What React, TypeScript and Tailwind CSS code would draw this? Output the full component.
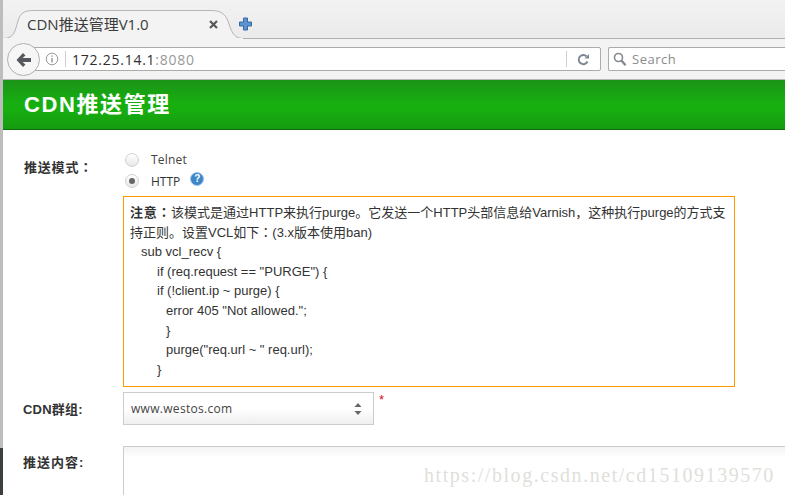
const sans = "font-['Liberation_Sans','Noto_Sans_CJK_SC',sans-serif]";

const BackArrow = () => (
  <svg width="18" height="16" viewBox="0 0 18 16">
    <path d="M8 1 L1.5 8 L8 15 L10.5 12.6 L7.5 10 H16 V6 H7.5 L10.5 3.4 Z" fill="#55585c" />
  </svg>
);

const Reload = () => (
  <svg width="13" height="13" viewBox="0 0 13 13" fill="none">
    <path d="M10.5 8.5 A4.6 4.6 0 1 1 9.5 3.2" stroke="#7d8794" strokeWidth="2" />
    <path d="M7.5 5.5 H12 V1 Z" fill="#7d8794" />
  </svg>
);

const SearchIcon = () => (
  <svg width="14" height="15" viewBox="0 0 14 15" fill="none">
    <circle cx="5.5" cy="5.5" r="4" stroke="#85898e" strokeWidth="1.6" />
    <path d="M8.6 8.8 L12.6 13.2" stroke="#85898e" strokeWidth="2.4" />
  </svg>
);

// the fullwidth colon sits centred in the reference, as in the TC face
const Colon = () => <span className="font-['Noto_Sans_CJK_TC',sans-serif]">：</span>;

const Tab = () => (
  <div className="relative w-[240px] h-[29px] mt-[10px] mb-[-1px] flex items-center pl-[24px] pr-[25px]">
    <svg className="absolute left-0 top-0" width="240" height="29" viewBox="0 0 240 29">
      <path
        d="M0 28.5 C12 28.5 12 20 15 11 C17 4 20 0.5 30 0.5 H208 C218 0.5 222 4 225 11 C228 20 230 28.5 240 28.5 V29 H0 Z"
        fill="#f3f3f3"
        stroke="#b4b4b4"
      />
      <path d="M0 29 H240" stroke="#f3f3f3" strokeWidth="2" />
    </svg>
    <span className="relative font-['Open_Sans','Noto_Sans_CJK_SC',sans-serif] text-[15px] text-[#3b3b3b] whitespace-nowrap">
      CDN推送管理V1.0
    </span>
    <svg className="relative ml-auto" width="9" height="9" viewBox="0 0 9 9">
      <path d="M1 1 L8 8 M8 1 L1 8" stroke="#55585c" strokeWidth="2.2" />
    </svg>
  </div>
);

const Toolbar = () => (
  <div className="relative h-[41px] bg-[#f3f3f3] border-b border-[#b6b6b6] flex items-center pl-[20px] pr-0 gap-[7px]">
    <div className="flex-1 h-[24px] bg-white border border-[#ababab] rounded-r-[2px] flex items-center pl-[21px] pr-[10px]">
      <svg width="14" height="14" viewBox="0 0 14 14" fill="none">
        <circle cx="7" cy="7" r="5.8" stroke="#9a9a9a" />
        <path d="M7 6 V10.5 M7 3.4 V4.8" stroke="#8a8a8a" strokeWidth="1.3" />
      </svg>
      <div className="w-px h-[16px] bg-[#d0d0d0] ml-[6px] mr-[6px]" />
      <span className="font-['Open_Sans',sans-serif] text-[14px] tracking-[0.75px] text-[#2e2e2e] pt-[1px]">
        172.25.14.1<span className="text-[#999]">:8080</span>
      </span>
      <div className="w-px h-[16px] bg-[#d0d0d0] ml-auto mr-[10px]" />
      <Reload />
    </div>
    <div className="w-[177px] h-[24px] bg-white border border-r-0 border-[#ababab] rounded-l-[2px] flex items-center pl-[4px] gap-[5px]">
      <SearchIcon />
      <span className="font-['Open_Sans',sans-serif] text-[13px] tracking-[0.5px] text-[#8b8b8b] pt-[2px]">Search</span>
    </div>
    <div className="absolute left-[4px] top-[4px] w-[33px] h-[33px] rounded-full bg-[#f6f6f6] border border-[#b0b0b0] flex items-center justify-center">
      <BackArrow />
    </div>
  </div>
);

const Radio = ({ checked }: { checked?: boolean }) => (
  <div className="w-[14px] h-[14px] rounded-full border border-[#d0d0d0] bg-gradient-to-b from-white to-[#e8e8e8] flex items-center justify-center">
    {checked && <div className="w-[6px] h-[6px] rounded-full bg-[#666]" />}
  </div>
);

const codeLines = [
  { text: "sub vcl_recv {", indent: "pl-[11px]" },
  { text: 'if (req.request == "PURGE") {', indent: "pl-[27px]" },
  { text: "if (!client.ip ~ purge) {", indent: "pl-[27px]" },
  { text: 'error 405 "Not allowed.";', indent: "pl-[36px]" },
  { text: "}", indent: "pl-[36px]" },
  { text: 'purge("req.url ~ " req.url);', indent: "pl-[36px]" },
  { text: "}", indent: "pl-[27px]" },
];

const Form = () => (
  <div className={`relative flex-1 overflow-hidden bg-white ${sans}`}>
    <div className="flex pt-[20px]">
      <div className="w-[120px] h-[30px] pl-[21px] pt-[7px] text-[13px] font-bold tracking-[0.8px] text-[#333]">
        推送模式
        <Colon />
      </div>
      <div className="flex-1 min-w-0">
        <div className="flex items-center h-[20px] pl-[2px] gap-[12px] text-[12px] text-[#444]">
          <Radio />
          <span className="font-['Open_Sans',sans-serif] tracking-[0.2px]">Telnet</span>
        </div>
        <div className="flex items-center h-[22px] pl-[2px] gap-[12px] text-[12px] text-[#333]">
          <Radio checked />
          <span className="font-['Open_Sans',sans-serif] pt-[2px]">HTTP</span>
          <div className="w-[14px] h-[14px] ml-[-2px] mb-[4px] rounded-full bg-[#3f86c9] border border-[#9cc4ea] flex items-center justify-center text-[10px] font-bold leading-none text-white">
            ?
          </div>
        </div>
        <div className="w-[612px] h-[191px] mt-[4px] border border-[#f90] pl-[6px] pt-[5px] text-[13px] leading-[19.6px] text-[#333]">
          <div className="h-[19.6px]">
            <b className="tracking-[0.7px]">
              注意
              <Colon />
            </b>
            该模式是通过HTTP来执行purge。它发送一个HTTP头部信息给Varnish，这种执行purge的方式支
          </div>
          <div className="h-[19.6px]">
            持正则。设置VCL如下
            <Colon />
            (3.x版本使用ban)
          </div>
          <div className="mt-[1px]">
            {codeLines.map((line, i) => (
              <div key={i} className={line.indent}>
                {line.text}
              </div>
            ))}
          </div>
        </div>
      </div>
    </div>

    <div className="flex mt-[5px]">
      <div className="w-[120px] pl-[20px] pt-[8px] text-[13px] font-bold tracking-[0.2px] text-[#333]">CDN群组:</div>
      <div className="w-[251px] h-[33px] border border-[#ccc] bg-gradient-to-b from-white via-white to-[#efefef] flex items-center pl-[7px] pr-[11px] text-[12px] tracking-[0.3px] text-[#444] font-['Open_Sans',sans-serif]">
        <span className="pt-[1px]">www.westos.com</span>
        <svg className="ml-auto" width="8" height="14" viewBox="0 0 8 14">
          <path d="M4 1 L7.5 5 H0.5 Z M4 13 L0.5 9 H7.5 Z" fill="#666" />
        </svg>
      </div>
      <span className="ml-[5px] mt-[1px] text-[13px] leading-[14px] text-[#e01010]">*</span>
    </div>

    <div className="flex mt-[21px]">
      <div className="w-[120px] pl-[20px] pt-[7px] text-[13px] font-bold tracking-[1px] text-[#333]">推送内容:</div>
      <div className="flex-1 h-[60px] border-t border-l border-[#ccc] bg-gradient-to-b from-[#f3f3f3] to-white to-[18%]" />
    </div>

    <span className="absolute left-[421px] top-[330px] font-['Liberation_Serif',serif] text-[20px] tracking-[1.55px] text-[#dfdfdb] whitespace-nowrap">
      https://blog.csdn.net/cd15109139570
    </span>
  </div>
);

export default function App() {
  return (
    <div className="w-[785px] h-[495px] flex overflow-hidden bg-white">
      <div className="w-[3px] flex flex-col bg-[#bdbdbd]">
        <div className="flex-1" />
        <div className="h-[47px] bg-[#3c3f3f]" />
      </div>
      <div className="flex-1 min-w-0 flex flex-col">
        <div className="h-[39px] bg-gradient-to-b from-[#f2f2f2] to-[#ebebeb] border-b border-[#b0b0b0] flex items-start">
          <Tab />
          <svg className="mt-[17px] ml-[-4px]" width="13" height="14" viewBox="0 0 13 14">
            <path d="M4.5 1 H8.5 V5 H12.5 V9 H8.5 V13 H4.5 V9 H0.5 V5 H4.5 Z" fill="#5a93cf" stroke="#3a6a9e" />
          </svg>
        </div>
        <Toolbar />
        <div className="h-[50px] bg-[linear-gradient(#1b9318,#17ae10_45%,#17ae10_60%,#159c10)] border-b border-[#0f6b0c] flex items-center pl-[21px]">
          <h1 className={`${sans} text-[22px] font-bold tracking-[1.6px] text-white`}>CDN推送管理</h1>
        </div>
        <Form />
      </div>
    </div>
  );
}
